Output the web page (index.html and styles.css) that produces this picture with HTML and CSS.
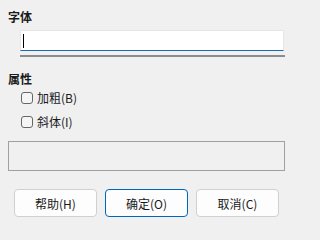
FILE: index.html
```html
<!DOCTYPE html>
<html>
<head>
<meta charset="utf-8">
<link rel="stylesheet" href="styles.css">
</head>
<body>
<div class="dialog">
  <div class="label">字体</div>
  <div class="field-wrap">
    <div class="field"><span class="caret"></span></div>
    <div class="field-bar"></div>
  </div>
  <div class="label label-attr">属性</div>
  <div class="checks">
    <label class="check"><span class="box"></span><span>加粗(B)</span></label>
    <label class="check"><span class="box"></span><span>斜体(I)</span></label>
  </div>
  <div class="preview"></div>
  <div class="buttons">
    <div class="btn">帮助(H)</div>
    <div class="btn btn-default">确定(O)</div>
    <div class="btn">取消(C)</div>
  </div>
</div>
</body>
</html>
```

FILE: styles.css
```css
html, body {
  margin: 0;
  padding: 0;
  background: #f0f0f0;
}
body {
  width: 293px;
  height: 231px;
  overflow: hidden;
  font-family: "Noto Sans CJK SC", "Noto Sans", sans-serif;
  font-size: 12px;
  color: #1a1a1a;
}
.dialog {
  display: flex;
  flex-direction: column;
  padding: 9px 8px 0 8px;
}
.label {
  font-weight: bold;
  font-size: 12px;
  line-height: 16px;
  height: 16px;
}
.field-wrap {
  margin: 5px 0 0 12px;
  width: 265px;
}
.field {
  box-sizing: border-box;
  width: 264px;
  height: 21px;
  background: #ffffff;
  border: 1px solid #e6e6e6;
  border-bottom: 1px solid #1a68b8;
  display: flex;
  align-items: center;
  padding-left: 2px;
}
.caret {
  width: 1px;
  height: 14px;
  background: #000;
}
.field-bar {
  margin-top: 4px;
  height: 2px;
  background: #8c8c90;
}
.label-attr {
  margin-top: 14px;
}
.checks {
  display: flex;
  flex-direction: column;
  gap: 12px;
  margin-top: 5px;
  padding-left: 13px;
}
.check {
  display: flex;
  align-items: center;
  gap: 4px;
  height: 12px;
  line-height: 12px;
}
.box {
  box-sizing: border-box;
  width: 12px;
  height: 12px;
  border: 1px solid #666666;
  border-radius: 3px;
  background: #f5f5f5;
}
.preview {
  margin-top: 13px;
  box-sizing: border-box;
  width: 277px;
  height: 30px;
  border: 1px solid #a0a0a0;
}
.buttons {
  display: flex;
  gap: 8px;
  margin-top: 18px;
  padding-left: 6px;
}
.btn {
  box-sizing: border-box;
  width: 83px;
  height: 28px;
  border: 1px solid #d0d0d0;
  border-radius: 4px;
  background: #fdfdfd;
  display: flex;
  align-items: center;
  justify-content: center;
  font-size: 12px;
  color: #1a1a1a;
}
.btn-default {
  border: 1px solid #0067c0;
}
```
